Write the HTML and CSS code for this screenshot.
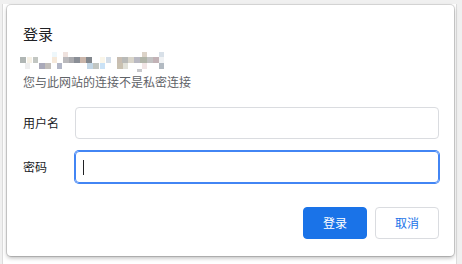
FILE: index.html
```html
<!DOCTYPE html>
<html lang="zh-CN">
<head>
<meta charset="utf-8">
<title>登录</title>
<link rel="stylesheet" href="styles.css">
</head>
<body>
<div class="stage">
  <div class="dialog">
    <h1 class="title">登录</h1>
    <svg class="mosaic" width="150" height="24" viewBox="0 0 150 24" aria-hidden="true">
      <rect x="32" y="4" width="5" height="5" fill="#eef7fb"/>
      <rect x="43" y="4" width="5" height="5" fill="#efe2de"/>
      <rect x="122" y="4" width="5" height="5" fill="#dcd3c8"/>
      <rect x="139" y="4" width="5" height="5" fill="#d8e0e8"/>
      <rect x="0" y="9" width="6" height="6" fill="#b0b6b4"/>
      <rect x="7" y="9" width="5" height="6" fill="#f6f1e6"/>
      <rect x="13" y="9" width="5" height="6" fill="#c2c6c2"/>
      <rect x="32" y="9" width="5" height="6" fill="#f6e9da"/>
      <rect x="43" y="9" width="6" height="6" fill="#bab9bc"/>
      <rect x="49" y="9" width="5" height="6" fill="#a9a9ad"/>
      <rect x="54" y="9" width="6" height="6" fill="#8a8e96"/>
      <rect x="60" y="9" width="6" height="6" fill="#c9b5aa"/>
      <rect x="66" y="9" width="6" height="6" fill="#82878d"/>
      <rect x="80" y="9" width="5" height="6" fill="#faf6ea"/>
      <rect x="86" y="9" width="5" height="6" fill="#d3dde8"/>
      <rect x="97" y="9" width="5" height="6" fill="#c8bdb1"/>
      <rect x="102" y="9" width="6" height="6" fill="#b9bab8"/>
      <rect x="108" y="9" width="6" height="6" fill="#d9d5ca"/>
      <rect x="114" y="9" width="6" height="6" fill="#b9b9c2"/>
      <rect x="120" y="9" width="7" height="6" fill="#b1b5a9"/>
      <rect x="127" y="9" width="6" height="6" fill="#c2c2c2"/>
      <rect x="133" y="9" width="6" height="6" fill="#c2b2b6"/>
      <rect x="139" y="9" width="5" height="6" fill="#f0f2f4"/>
      <rect x="5" y="15" width="5" height="6" fill="#eeeeee"/>
      <rect x="19" y="15" width="6" height="6" fill="#a9a9b9"/>
      <rect x="25" y="15" width="6" height="6" fill="#c2beba"/>
      <rect x="37" y="15" width="5" height="6" fill="#b2b6c6"/>
      <rect x="67" y="15" width="6" height="6" fill="#c2d6e6"/>
      <rect x="73" y="15" width="6" height="6" fill="#c2c6c2"/>
      <rect x="80" y="15" width="5" height="6" fill="#cae2f6"/>
      <rect x="97" y="15" width="6" height="6" fill="#c9c1b1"/>
      <rect x="103" y="15" width="5" height="6" fill="#e1e1d9"/>
      <rect x="122" y="15" width="5" height="6" fill="#f1e5e5"/>
      <rect x="139" y="15" width="5" height="6" fill="#b2bac2"/>
      <rect x="117" y="21" width="5" height="3" fill="#c8c8cc"/>
    </svg>
    <p class="subtitle">您与此网站的连接不是私密连接</p>
    <div class="form">
      <div class="row">
        <span class="label">用户名</span>
        <div class="field"></div>
      </div>
      <div class="row">
        <span class="label">密码</span>
        <div class="field field-focus"><span class="caret"></span></div>
      </div>
    </div>
    <div class="actions">
      <button class="btn btn-primary" type="button">登录</button>
      <button class="btn btn-secondary" type="button">取消</button>
    </div>
  </div>
</div>
</body>
</html>
```
FILE: styles.css
```css
html, body {
  margin: 0;
  padding: 0;
}
body {
  width: 462px;
  height: 264px;
  overflow: hidden;
  background: #f0f0f0;
  font-family: "Noto Sans CJK SC", "Noto Sans", sans-serif;
  color: #202124;
}
.stage {
  margin: 4px 5px 0 2px;
  height: 260px;
  box-sizing: border-box;
  background: #ffffff;
  border-left: 1px solid #dcdcdc;
  border-right: 1px solid #dcdcdc;
  padding: 1px 2px 0 4px;
}
.dialog {
  width: 447px;
  height: 251px;
  box-sizing: border-box;
  background: #ffffff;
  border-radius: 4px;
  box-shadow: 0 0 0 1px rgba(0, 0, 0, 0.14), 0 2px 4px rgba(0, 0, 0, 0.28);
  padding: 19px 15px 0 16px;
  display: flex;
  flex-direction: column;
}
.title {
  margin: 0;
  font-size: 15px;
  line-height: 20px;
  font-weight: 400;
  color: #202124;
}
.mosaic {
  display: block;
  margin: 4px 0 0 -3px;
}
.subtitle {
  margin: 2px 0 0;
  font-size: 12px;
  line-height: 16px;
  color: #5f6368;
}
.form {
  margin-top: 17px;
  display: flex;
  flex-direction: column;
  gap: 12px;
}
.row {
  display: flex;
  align-items: center;
}
.label {
  width: 52px;
  flex: none;
  font-size: 12px;
  line-height: 16px;
  color: #202124;
}
.field {
  flex: 1;
  height: 32px;
  box-sizing: border-box;
  border: 1px solid #dadce0;
  border-radius: 4px;
  display: flex;
  align-items: center;
  padding-left: 7px;
}
.field-focus {
  border-color: #4285f4;
  box-shadow: 0 0 0 1px #4285f4;
}
.caret {
  display: block;
  width: 1px;
  height: 15px;
  background: #202124;
}
.actions {
  margin-top: 24px;
  display: flex;
  justify-content: flex-end;
  gap: 8px;
}
.btn {
  width: 64px;
  height: 32px;
  box-sizing: border-box;
  border-radius: 4px;
  font-family: "Noto Sans CJK SC", "Noto Sans", sans-serif;
  font-size: 12px;
  line-height: 16px;
  padding: 0;
  cursor: pointer;
}
.btn-primary {
  background: #1a73e8;
  border: 1px solid #1a73e8;
  color: #ffffff;
}
.btn-secondary {
  background: #ffffff;
  border: 1px solid #dadce0;
  color: #1a73e8;
}
```
